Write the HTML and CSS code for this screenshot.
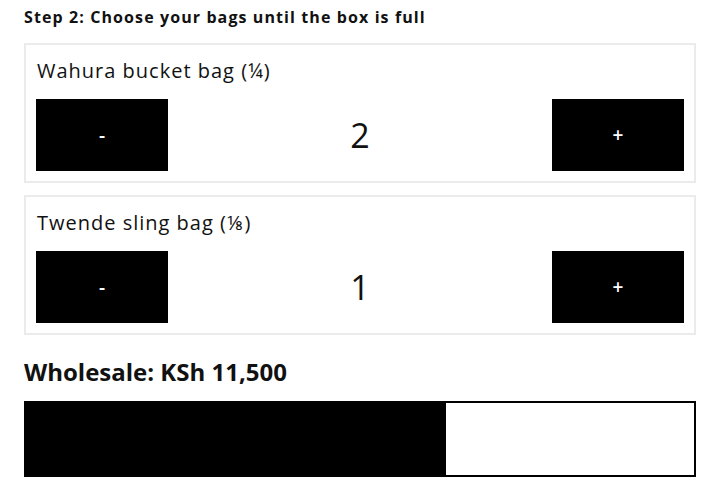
FILE: index.html
```html
<!DOCTYPE html>
<html>
<head>
<meta charset="utf-8">
<link rel="stylesheet" href="styles.css">
</head>
<body>
<div class="page">
  <h2 class="step">Step 2: Choose your bags until the box is full</h2>
  <div class="card">
    <div class="card-title">Wahura bucket bag (¼)</div>
    <div class="counter">
      <button class="btn">-</button>
      <span class="count">2</span>
      <button class="btn">+</button>
    </div>
  </div>
  <div class="card">
    <div class="card-title">Twende sling bag (⅛)</div>
    <div class="counter">
      <button class="btn">-</button>
      <span class="count">1</span>
      <button class="btn">+</button>
    </div>
  </div>
  <h3 class="total">Wholesale: KSh 11,500</h3>
  <div class="bar"><div class="fill" style="width:62.9%"></div></div>
</div>
</body>
</html>
```
FILE: styles.css
```css
html, body { margin: 0; padding: 0; background: #fff; }
body { font-family: "Open Sans", "DejaVu Sans", sans-serif; color: #111; }
.page { padding: 6px 24px 0 24px; display: flex; flex-direction: column; }
.step { margin: 0 0 15px 0; font-size: 16px; font-weight: 700; line-height: 22px; letter-spacing: 1.1px; }
.card { border: 2px solid #ebebeb; padding: 10px; margin-bottom: 12px; display: flex; flex-direction: column; }
.card-title { font-size: 20px; line-height: 24px; margin: 4px 0 16px 1px; font-weight: 400; letter-spacing: 1px; }
.counter { display: flex; align-items: center; justify-content: space-between; }
.btn { width: 132px; height: 72px; background: #000; color: #fff; border: none; font-family: "Open Sans", sans-serif; font-size: 19px; font-weight: 600; padding: 0; }
.count { font-size: 34px; font-weight: 400; }
.total { margin: 10px 0 14px 0; font-size: 24px; font-weight: 700; line-height: 30px; }
.bar { height: 72px; border: 2px solid #000; display: flex; }
.fill { background: #000; height: 100%; }
```
